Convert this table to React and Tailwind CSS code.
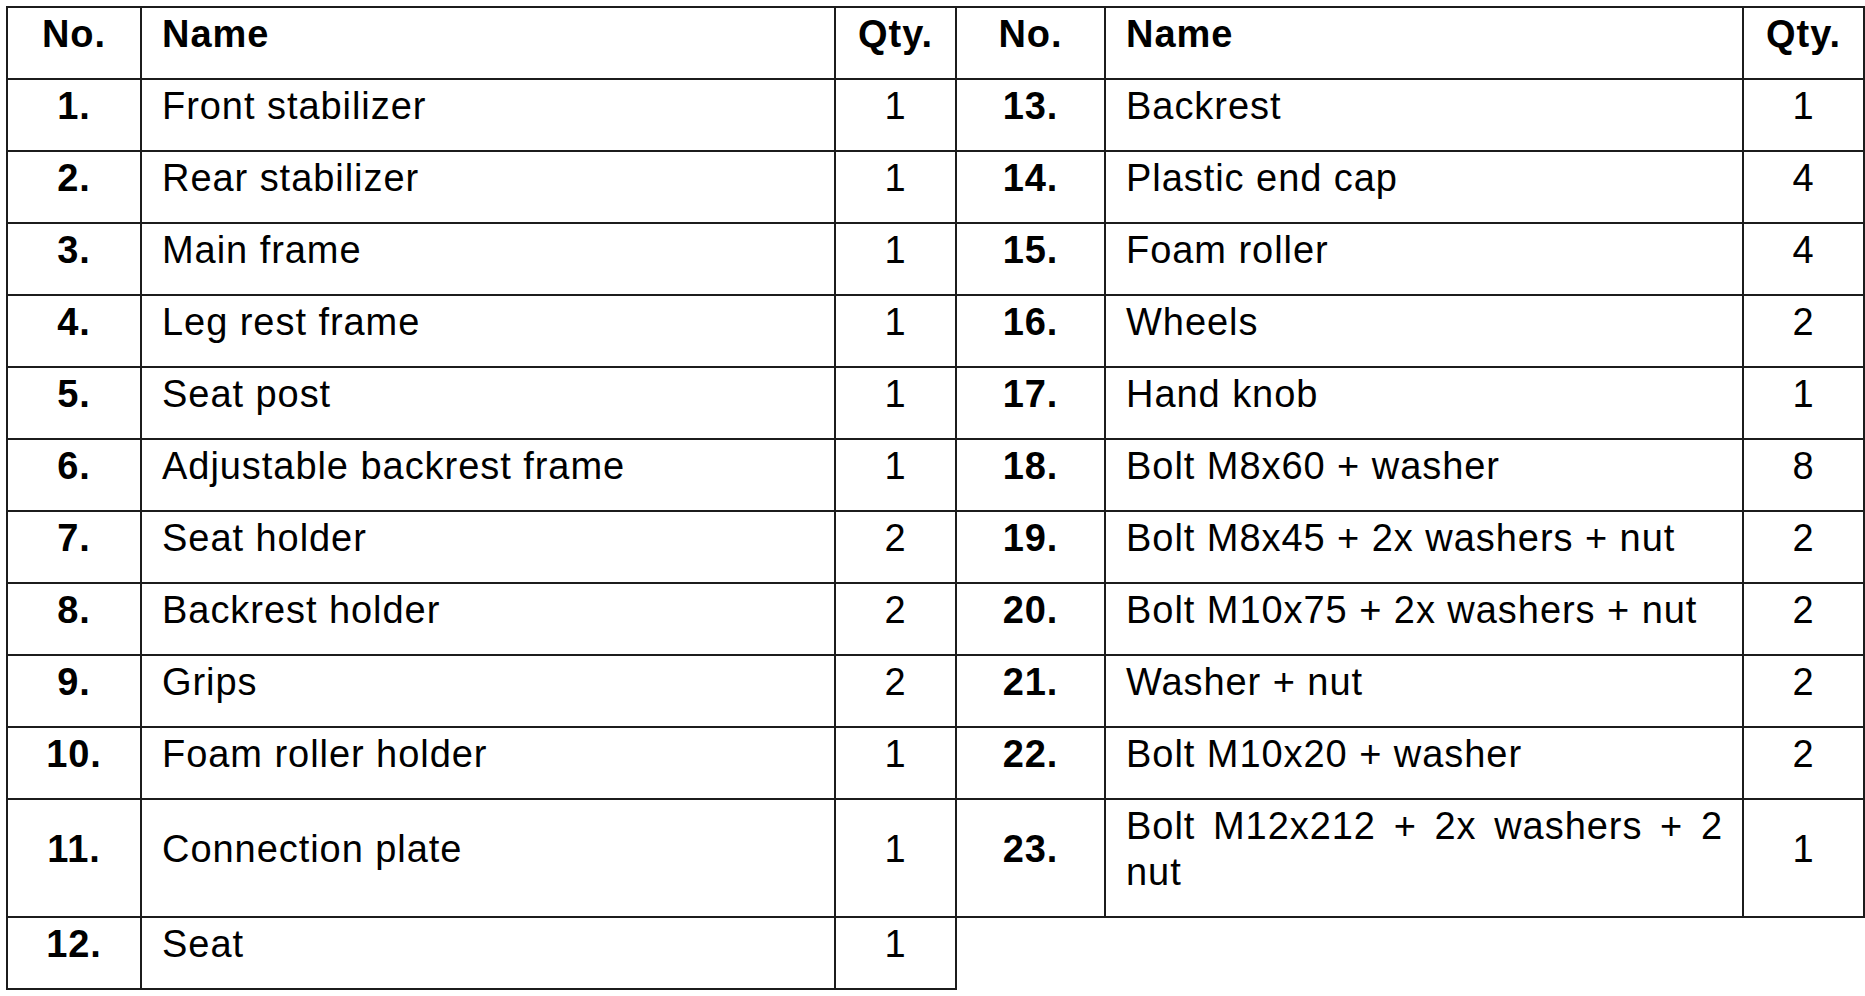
const left = [
  ['1.', 'Front stabilizer', '1'],
  ['2.', 'Rear stabilizer', '1'],
  ['3.', 'Main frame', '1'],
  ['4.', 'Leg rest frame', '1'],
  ['5.', 'Seat post', '1'],
  ['6.', 'Adjustable backrest frame', '1'],
  ['7.', 'Seat holder', '2'],
  ['8.', 'Backrest holder', '2'],
  ['9.', 'Grips', '2'],
  ['10.', 'Foam roller holder', '1'],
  ['11.', 'Connection plate', '1', true],
  ['12.', 'Seat', '1'],
]

const right = [
  ['13.', 'Backrest', '1'],
  ['14.', 'Plastic end cap', '4'],
  ['15.', 'Foam roller', '4'],
  ['16.', 'Wheels', '2'],
  ['17.', 'Hand knob', '1'],
  ['18.', 'Bolt M8x60 + washer', '8'],
  ['19.', 'Bolt M8x45 + 2x washers + nut', '2'],
  ['20.', 'Bolt M10x75 + 2x washers + nut', '2'],
  ['21.', 'Washer + nut', '2'],
  ['22.', 'Bolt M10x20 + washer', '2'],
  ['23.', 'Bolt M12x212 + 2x washers + 2 nut', '1', true],
]

const cell = 'flex items-center pb-[18px] border-r-2 border-b-2 border-[#1c1c1c]'

function PartsTable({ rows, cols }) {
  return (
    <div className={`border-t-2 border-[#1c1c1c] ${cols.wrap}`}>
      <div className={`grid ${cols.grid} h-[72px]`}>
        <div className={`${cell} justify-center font-bold`}>No.</div>
        <div className={`${cell} pl-[20px] pr-[19px] font-bold`}>Name</div>
        <div className={`${cell} justify-center font-bold`}>Qty.</div>
      </div>
      {rows.map(([no, name, qty, tall]) => (
        <div key={no} className={`grid ${cols.grid} ${tall ? 'h-[118px]' : 'h-[72px]'}`}>
          <div className={`${cell} justify-center font-bold`}>{no}</div>
          <div className={`${cell} pl-[20px] pr-[19px]`}>
            <div className="w-full text-justify">{name}</div>
          </div>
          <div className={`${cell} justify-center`}>{qty}</div>
        </div>
      ))}
    </div>
  )
}

export default function App() {
  return (
    <div className="bg-white min-h-screen pl-[6px] pt-[6px] flex items-start text-black text-[38px] leading-[46px] tracking-[0.95px] font-['Liberation_Sans',Arial,sans-serif]">
      <PartsTable
        rows={left}
        cols={{ wrap: 'border-l-2 w-[951px]', grid: 'grid-cols-[134px_694px_121px]' }}
      />
      <PartsTable
        rows={right}
        cols={{ wrap: 'w-[908px]', grid: 'grid-cols-[149px_638px_121px]' }}
      />
    </div>
  )
}
